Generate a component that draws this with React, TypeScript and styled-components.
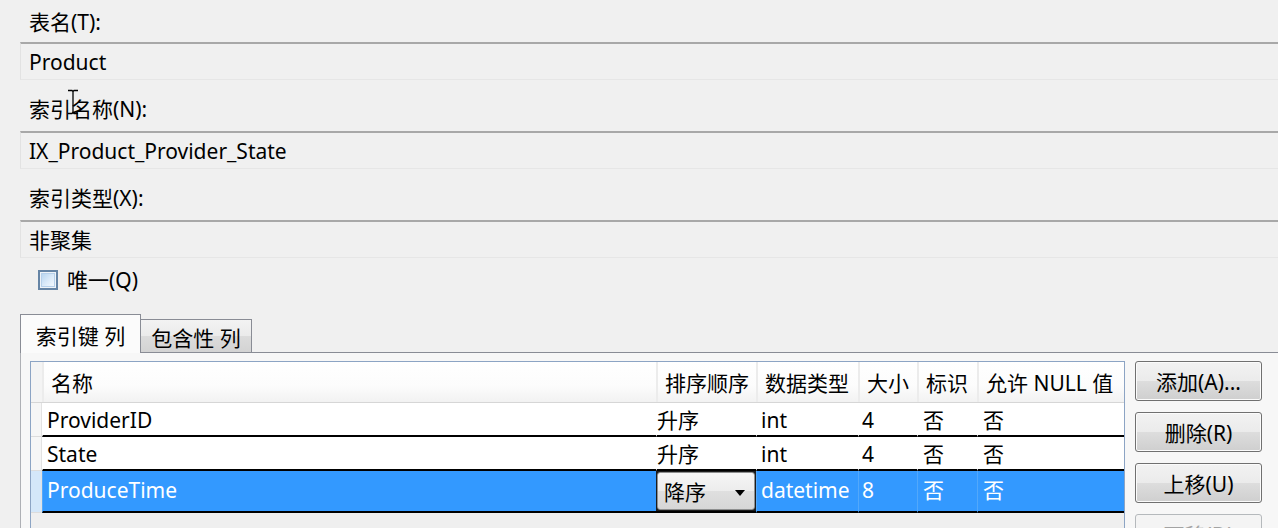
import React from "react";
import styled, { createGlobalStyle, css } from "styled-components";

const Global = createGlobalStyle`
  html, body {
    margin: 0;
    padding: 0;
    background: #f0f0f0;
    overflow: hidden;
  }
  body {
    font-family: "Noto Sans", "Noto Sans CJK SC", sans-serif;
    font-size: 21px;
    color: #000;
  }
  * { box-sizing: border-box; }
`;

const Page = styled.div`
  position: relative;
  width: 1300px;
  height: 528px;
  overflow: hidden;
`;

const Form = styled.div`
  display: flex;
  flex-direction: column;
  padding-left: 20px;
`;

const FieldLabel = styled.div<{ $first?: boolean }>`
  height: ${(p) => (p.$first ? 42 : 51)}px;
  display: flex;
  align-items: center;
  padding-left: 9px;
  padding-top: ${(p) => (p.$first ? 3 : 7)}px;
  line-height: 1;
`;

const TextBox = styled.div`
  height: 38px;
  display: flex;
  align-items: center;
  padding-left: 8px;
  padding-top: 2px;
  border-top: 2px solid #a8a8a8;
  border-left: 1px solid #e2e2e2;
  border-bottom: 1px solid #e6e6e6;
  background: #f0f0f0;
  line-height: 1;
`;

const CheckRow = styled.div`
  height: 44px;
  margin-bottom: 13px;
  display: flex;
  align-items: center;
  gap: 9px;
  padding-left: 18px;
  line-height: 1;
`;

const CheckBox = styled.span`
  width: 20px;
  height: 20px;
  border: 2px solid #6584a5;
  background: #eef3f8;
  padding: 1px;
  display: inline-flex;
  &::after {
    content: "";
    flex: 1;
    border: 1px solid #b6d0ea;
    background: linear-gradient(135deg, #b9d6f1 0%, #dcebf9 55%, #f2f8fe 100%);
  }
`;

const TabStrip = styled.div`
  display: flex;
  align-items: flex-end;
  height: 38px;
  position: relative;
  z-index: 1;
  margin-bottom: -1px;
`;

const Tab = styled.div<{ $active?: boolean }>`
  display: flex;
  align-items: center;
  justify-content: center;
  padding-top: 5px;
  line-height: 1;
  border: 1px solid #898c95;
  ${(p) =>
    p.$active
      ? css`
          width: 121px;
          height: 39px;
          border-bottom: none;
          background: #fbfbfb;
        `
      : css`
          width: 111px;
          height: 34px;
          border-left: none;
          background: linear-gradient(#f3f3f3 0%, #ebebeb 50%, #dcdcdc 51%, #d3d3d3 100%);
        `}
`;

const TabPanel = styled.div`
  border-top: 1px solid #898c95;
  border-left: 1px solid #aeb0b5;
  background: #f7f7f7;
  padding: 8px 0 0 9px;
  display: flex;
  align-items: flex-start;
  gap: 10px;
  height: 200px;
`;

const COLS = "11px 614px 100px 102px 59px 60px 147px";

const Grid = styled.div`
  width: 1095px;
  height: 200px;
  border: 1px solid #8ca4c4;
  background: #efefef;
  display: flex;
  flex-direction: column;
`;

const HeaderRow = styled.div`
  display: grid;
  grid-template-columns: ${COLS};
  height: 41px;
  border-bottom: 1px solid #d6d6d6;
  background: linear-gradient(#ffffff 0%, #fcfcfc 60%, #f2f2f2 100%);
`;

const HeaderCell = styled.div<{ $corner?: boolean }>`
  display: flex;
  align-items: center;
  padding-left: 7px;
  padding-top: 3px;
  line-height: 1;
  white-space: nowrap;
  border-left: 2px solid #ececec;
  ${(p) =>
    p.$corner &&
    css`
      border-left: none;
      padding: 0;
      background: #f4f4f4;
    `}
`;

const DataRow = styled.div<{ $selected?: boolean }>`
  display: grid;
  grid-template-columns: ${COLS};
  height: ${(p) => (p.$selected ? 42 : 34)}px;
  color: ${(p) => (p.$selected ? "#fff" : "#000")};
`;

const RowHead = styled.div<{ $selected?: boolean }>`
  background: ${(p) => (p.$selected ? "#d4e7f9" : "#f6f6f6")};
  border-bottom: 1px solid #dcdcdc;
  border-right: 1px solid #e2e2e2;
`;

const Cell = styled.div<{ $selected?: boolean; $pad: number }>`
  display: flex;
  align-items: center;
  padding-left: ${(p) => p.$pad}px;
  padding-top: 3px;
  padding-bottom: ${(p) => (p.$selected ? 5 : 0)}px;
  line-height: 1;
  white-space: nowrap;
  border-bottom: 2px solid #000;
  background: ${(p) => (p.$selected ? "#3399ff" : "#fff")};
  border-left: 1px solid ${(p) => (p.$selected ? "#52a8fb" : "#fff")};
`;

const ComboCell = styled.div`
  display: flex;
  padding: 1px;
  background: #1c1c1c;
  border-bottom: 2px solid #000;
`;

const Combo = styled.div`
  flex: 1;
  display: flex;
  align-items: center;
  justify-content: space-between;
  padding: 3px 9px 0 6px;
  line-height: 1;
  color: #000;
  border: 1px solid #8e8f8f;
  border-radius: 3px;
  background: linear-gradient(#f6f6f6 0%, #ececec 50%, #dfdfdf 51%, #d6d6d6 100%);
`;

const Caret = styled.span`
  width: 0;
  height: 0;
  border-left: 5px solid transparent;
  border-right: 5px solid transparent;
  border-top: 6px solid #000;
`;

const ButtonColumn = styled.div`
  display: flex;
  flex-direction: column;
  gap: 11px;
  width: 127px;
`;

const Button = styled.div<{ $disabled?: boolean }>`
  height: 40px;
  display: flex;
  align-items: center;
  justify-content: center;
  padding-top: 2px;
  line-height: 1;
  border-radius: 3px;
  ${(p) =>
    p.$disabled
      ? css`
          border: 1px solid #b5b9bc;
          background: #f4f4f4;
          color: #a3a3a3;
        `
      : css`
          border: 1px solid #707070;
          background: linear-gradient(#f2f2f2 0%, #ebebeb 50%, #dddddd 51%, #cfcfcf 100%);
          box-shadow: inset 0 0 0 1px #fbfbfb;
          color: #000;
        `}
`;

const Cursor = styled.svg`
  position: absolute;
  left: 66px;
  top: 89px;
  pointer-events: none;
`;

type Row = { name: string; order: string; type: string; size: string; ident: string; nul: string };

const rows: Row[] = [
  { name: "ProviderID", order: "升序", type: "int", size: "4", ident: "否", nul: "否" },
  { name: "State", order: "升序", type: "int", size: "4", ident: "否", nul: "否" },
  { name: "ProduceTime", order: "降序", type: "datetime", size: "8", ident: "否", nul: "否" },
];

const headers = ["名称", "排序顺序", "数据类型", "大小", "标识", "允许 NULL 值"];

export default function App() {
  return (
    <Page>
      <Global />
      <Form>
        <FieldLabel $first>表名(T):</FieldLabel>
        <TextBox>Product</TextBox>
        <FieldLabel>索引名称(N):</FieldLabel>
        <TextBox>IX_Product_Provider_State</TextBox>
        <FieldLabel>索引类型(X):</FieldLabel>
        <TextBox>非聚集</TextBox>
        <CheckRow>
          <CheckBox />
          <span>唯一(Q)</span>
        </CheckRow>
        <TabStrip>
          <Tab $active>索引键 列</Tab>
          <Tab>包含性 列</Tab>
        </TabStrip>
        <TabPanel>
          <Grid>
            <HeaderRow>
              <HeaderCell $corner />
              {headers.map((h) => (
                <HeaderCell key={h}>{h}</HeaderCell>
              ))}
            </HeaderRow>
            {rows.map((r, i) => {
              const sel = i === 2;
              return (
                <DataRow key={r.name} $selected={sel}>
                  <RowHead $selected={sel} />
                  <Cell $selected={sel} $pad={4}>{r.name}</Cell>
                  {sel ? (
                    <ComboCell>
                      <Combo>
                        <span>{r.order}</span>
                        <Caret />
                      </Combo>
                    </ComboCell>
                  ) : (
                    <Cell $pad={0}>{r.order}</Cell>
                  )}
                  <Cell $selected={sel} $pad={4}>{r.type}</Cell>
                  <Cell $selected={sel} $pad={3}>{r.size}</Cell>
                  <Cell $selected={sel} $pad={5}>{r.ident}</Cell>
                  <Cell $selected={sel} $pad={5}>{r.nul}</Cell>
                </DataRow>
              );
            })}
          </Grid>
          <ButtonColumn>
            <Button>添加(A)...</Button>
            <Button>删除(R)</Button>
            <Button>上移(U)</Button>
            <Button $disabled>下移(D)</Button>
          </ButtonColumn>
        </TabPanel>
      </Form>
      <Cursor width="14" height="26" viewBox="0 0 14 26">
        <path d="M2 1.5h4l1 1 1-1h4M7 2.5v21M2 24.5h4l1-1 1 1h4" stroke="#000" strokeWidth="1.3" fill="none" />
      </Cursor>
    </Page>
  );
}
